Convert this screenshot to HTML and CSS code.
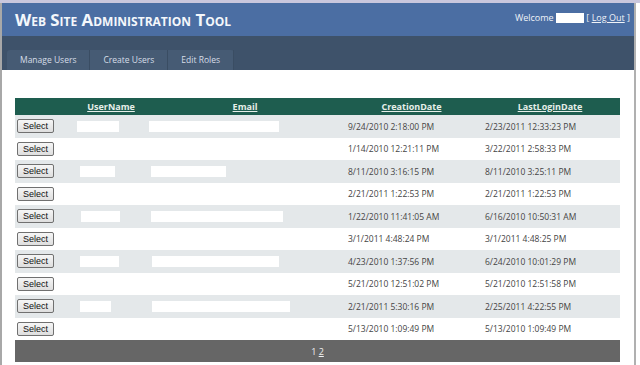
FILE: index.html
```html
<!DOCTYPE html>
<html lang="en">
<head>
  <meta charset="UTF-8" />
  <title>Web Site Administration Tool</title>
  <link rel="stylesheet" href="styles.css">
</head>
<body>
  <div class="frame">
    <div class="page-header">
      <h1 class="title">Web Site Administration Tool</h1>
      <div class="login">
        Welcome <span class="blank name-blank"></span> [ <a href="#">Log Out</a> ]
      </div>
    </div>

    <div class="nav">
      <div class="tabs">
        <a class="tab" href="#">Manage Users</a>
        <a class="tab" href="#">Create Users</a>
        <a class="tab" href="#">Edit Roles</a>
      </div>
    </div>

    <div class="content">
      <table class="grid">
        <colgroup>
          <col class="c-select">
          <col class="c-user">
          <col class="c-email">
          <col class="c-created">
          <col class="c-login">
        </colgroup>
        <thead>
          <tr>
            <th></th>
            <th><a href="#">UserName</a></th>
            <th><a href="#">Email</a></th>
            <th><a href="#">CreationDate</a></th>
            <th><a href="#">LastLoginDate</a></th>
          </tr>
        </thead>
        <tbody>
          <tr class="alt">
            <td><button class="select-btn">Select</button></td>
            <td><span class="blank" style="width:42px"></span></td>
            <td><span class="blank" style="width:130px"></span></td>
            <td>9/24/2010 2:18:00 PM</td>
            <td>2/23/2011 12:33:23 PM</td>
          </tr>
          <tr>
            <td><button class="select-btn">Select</button></td>
            <td></td>
            <td></td>
            <td>1/14/2010 12:21:11 PM</td>
            <td>3/22/2011 2:58:33 PM</td>
          </tr>
          <tr class="alt">
            <td><button class="select-btn">Select</button></td>
            <td><span class="blank" style="width:35px;margin-left:3px"></span></td>
            <td><span class="blank" style="width:75px;margin-left:2px"></span></td>
            <td>8/11/2010 3:16:15 PM</td>
            <td>8/11/2010 3:25:11 PM</td>
          </tr>
          <tr>
            <td><button class="select-btn">Select</button></td>
            <td></td>
            <td></td>
            <td>2/21/2011 1:22:53 PM</td>
            <td>2/21/2011 1:22:53 PM</td>
          </tr>
          <tr class="alt">
            <td><button class="select-btn">Select</button></td>
            <td><span class="blank" style="width:39px;margin-left:4px"></span></td>
            <td><span class="blank" style="width:132px;margin-left:2px"></span></td>
            <td>1/22/2010 11:41:05 AM</td>
            <td>6/16/2010 10:50:31 AM</td>
          </tr>
          <tr>
            <td><button class="select-btn">Select</button></td>
            <td></td>
            <td></td>
            <td>3/1/2011 4:48:24 PM</td>
            <td>3/1/2011 4:48:25 PM</td>
          </tr>
          <tr class="alt">
            <td><button class="select-btn">Select</button></td>
            <td><span class="blank" style="width:39px;margin-left:3px"></span></td>
            <td><span class="blank" style="width:127px;margin-left:3px"></span></td>
            <td>4/23/2010 1:37:56 PM</td>
            <td>6/24/2010 10:01:29 PM</td>
          </tr>
          <tr>
            <td><button class="select-btn">Select</button></td>
            <td></td>
            <td></td>
            <td>5/21/2010 12:51:02 PM</td>
            <td>5/21/2010 12:51:58 PM</td>
          </tr>
          <tr class="alt">
            <td><button class="select-btn">Select</button></td>
            <td><span class="blank" style="width:31px;margin-left:3px"></span></td>
            <td><span class="blank" style="width:138px;margin-left:3px"></span></td>
            <td>2/21/2011 5:30:16 PM</td>
            <td>2/25/2011 4:22:55 PM</td>
          </tr>
          <tr>
            <td><button class="select-btn">Select</button></td>
            <td></td>
            <td></td>
            <td>5/13/2010 1:09:49 PM</td>
            <td>5/13/2010 1:09:49 PM</td>
          </tr>
        </tbody>
        <tfoot>
          <tr>
            <td colspan="5">1 <a href="#">2</a></td>
          </tr>
        </tfoot>
      </table>
    </div>
  </div>
</body>
</html>
```

FILE: styles.css
```css
body {
  margin: 0;
  background: #ffffff;
  border-top: 3px solid #c9c7dd;
  font-family: "Open Sans", "DejaVu Sans", sans-serif;
  color: #333;
}

.frame {
  width: 632px;
  height: 362px;
  overflow: hidden;
  border-left: 2px solid #a8a8a8;
  border-right: 2px solid #b0b0b0;
}

.page-header {
  display: flex;
  justify-content: space-between;
  align-items: flex-start;
  height: 33px;
  background: #4b6ea3;
  color: #fff;
}

.title {
  margin: 6px 0 0 13px;
  font-size: 16.8px;
  font-weight: bold;
  font-variant: small-caps;
  line-height: 22px;
  color: #f4f7fb;
}

.login {
  margin: 8px 4px 0 0;
  font-size: 9px;
  line-height: 14px;
  color: #f0f3f8;
}

.login a {
  color: #f0f3f8;
}

.blank {
  display: inline-block;
  height: 11px;
  background: #ffffff;
  vertical-align: middle;
}

.name-blank {
  width: 28px;
  height: 10px;
  vertical-align: -2px;
}

.nav {
  height: 34px;
  background: #3e526a;
  display: flex;
  align-items: flex-end;
}

.tabs {
  display: flex;
  margin-left: 5px;
  background: #465b74;
  border-radius: 3px 3px 0 0;
}

.tab {
  display: block;
  height: 20px;
  line-height: 20px;
  padding: 0 13px;
  font-size: 8.5px;
  color: #d6dee8;
  text-decoration: none;
  border-right: 1px solid #3a4d63;
}

.content {
  padding: 28px 0 0 13px;
}

.grid {
  width: 605px;
  border-collapse: collapse;
  table-layout: fixed;
  font-size: 8.5px;
  color: #444;
}

.c-select { width: 60px; }
.c-user { width: 72px; }
.c-email { width: 196px; }
.c-created { width: 137px; }
.c-login { width: 140px; }

.grid th {
  height: 17px;
  padding: 0;
  background: #1e5d4f;
  font-size: 9px;
  font-weight: bold;
  text-align: center;
}

.grid th a {
  color: #e6efe9;
}

.grid td {
  height: 22.5px;
  padding: 0 0 0 2px;
  white-space: nowrap;
}

.grid td:nth-child(4),
.grid td:nth-child(5) {
  padding-left: 5px;
}

.grid tr.alt td {
  background: #e4e8ea;
}

.select-btn {
  height: 14px;
  width: 37px;
  padding: 0;
  font-family: "Liberation Sans", Arial, sans-serif;
  font-size: 9px;
  color: #111;
  background: linear-gradient(#f6f6f6, #dedede);
  border: 1px solid #707070;
  border-radius: 2px;
}

.grid tfoot td {
  height: 22px;
  padding: 0;
  background: #666666;
  color: #f0f0f0;
  text-align: center;
  font-size: 9px;
}

.grid tfoot a {
  color: #f0f0f0;
}
```
